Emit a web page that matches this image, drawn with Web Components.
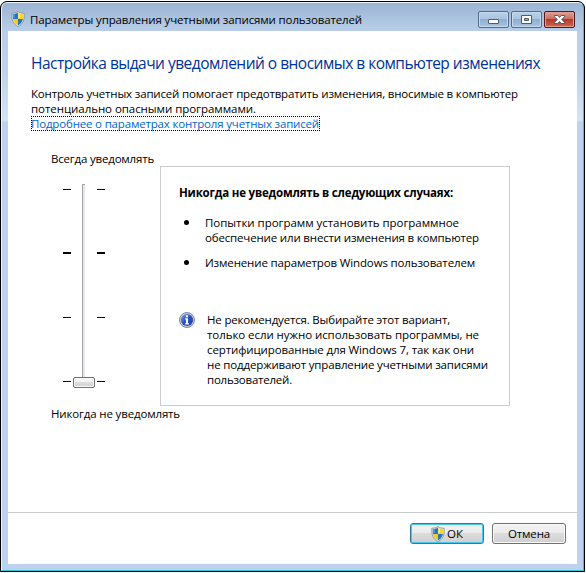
<!DOCTYPE html>
<html lang="ru"><head><meta charset="utf-8"><title>Параметры управления учетными записями пользователей</title>
<style>
html,body{margin:0;height:100%;overflow:hidden;background:#fff}
body{font:11.5px/15px "Open Sans","Noto Sans",sans-serif;color:#000}
</style></head><body>
<uac-window></uac-window>
<script>
class Base extends HTMLElement{
  constructor(){super();this.attachShadow({mode:'open'}).innerHTML=this.html();}
  html(){return '';}
}
// A single line of text spaced to an exact width (attribute w).
class TextLine extends Base{
  html(){return `<style>:host{display:block;white-space:pre;height:var(--lh,15px);line-height:var(--lh,15px)}span{display:inline-block;vertical-align:top}</style><span><slot></slot></span>`;}
  connectedCallback(){
    const s=this.shadowRoot.querySelector('span'),w=+this.getAttribute('w');
    const n=this.textContent.length,nat=s.getBoundingClientRect().width;
    if(w&&n)s.style.letterSpacing=((w-nat)/n).toFixed(4)+'px';
  }
}
class ShieldIcon extends Base{
  html(){return `<style>:host{display:block;width:14px;height:16px;flex:none}svg{display:block}</style>
<svg width="14" height="16" viewBox="0 0 14 16"><defs><clipPath id="c"><path d="M7 1.6C5.4 2.8 3.8 3.2 1.8 3.2C1.6 8.5 2.7 12 7 14.3C11.3 12 12.4 8.5 12.2 3.2C10.2 3.2 8.6 2.8 7 1.6Z"/></clipPath></defs>
<path d="M7 .5C5.3 1.8 3.4 2.3.8 2.2C.5 9 1.8 13 7 15.5C12.2 13 13.5 9 13.2 2.2C10.6 2.3 8.7 1.8 7 .5Z" fill="#e4e8ea" stroke="#7e8b92" stroke-width=".8"/>
<g clip-path="url(#c)"><path fill="#2474c0" d="M0 0H7V8H0Z"/><path fill="#f7d62c" d="M7 0H14V8H7Z"/><path fill="#f2cb25" d="M0 8H7V16H0Z"/><path fill="#2474c0" d="M7 8H14V16H7Z"/><path fill="#fff3a0" d="M7 2H9V7H7Z" opacity=".6"/><path fill="#5ba9df" d="M2 3H4V7H2Z" opacity=".6"/></g></svg>`;}
}
class CaptionButton extends Base{
  html(){
    const k=this.getAttribute('kind');
    const g={min:'<rect x="10.5" y="8.5" width="10" height="4" rx=".5" fill="#fff" stroke="#535b68"/>',
    max:'<path fill="#fff" stroke="#535b68" fill-rule="evenodd" d="M10.5 4.5h10v8h-10zM13.5 7.5v2h4v-2z"/>',
    close:'<path d="M10.5 4.5h3.3l1.7 2 1.7-2h3.3v1.2l-2.8 2.8 2.8 2.8v1.2h-3.3l-1.7-2-1.7 2h-3.3v-1.2l2.8-2.8-2.8-2.8z" fill="#fff" stroke="#5b4650" stroke-width=".9"/>'}[k];
    const c=k==='close';
    return `<style>:host{display:block;box-sizing:border-box;width:31px;height:17px;border:1px solid ${c?'#4d1720':'#53698a'};border-radius:2px;
box-shadow:inset 0 0 0 1px ${c?'#e2a093':'#c6daee'};background:${c?'linear-gradient(#dda095 0,#cc6d5d 48%,#b63a28 50%,#cc6550 100%)':'linear-gradient(#bbd0e8 0,#a9c3e0 48%,#8daed2 50%,#a7c4e3 100%)'}}svg{display:block;margin:-1px}</style><svg width="31" height="17">${g}</svg>`;}
}
class TitleBar extends Base{
  html(){return `<style>:host{display:flex;height:28px;padding:0 2px 0 3px;align-items:flex-start}
shield-icon{margin-top:8px}text-line{margin:9px 0 0 5px;flex:1}.b{display:flex;gap:2px;margin-top:8px}</style>
<shield-icon></shield-icon><text-line w="332">Параметры управления учетными записями пользователей</text-line>
<div class="b"><caption-button kind="min"></caption-button><caption-button kind="max"></caption-button><caption-button kind="close"></caption-button></div>`;}
}
class LevelSlider extends Base{
  html(){return `<style>:host{display:grid;width:42px;height:204px;grid-template-columns:8px 26px 8px;justify-content:space-between}
.t{box-sizing:border-box;display:flex;flex-direction:column;padding:5px 0 0;height:198px;gap:63px}
i{display:block;height:1px;background:#000}i.f{height:2px;margin:-1px 0 0}
.r{display:flex;flex-direction:column;align-items:center;height:204px}
.l{box-sizing:border-box;width:3px;height:193px;border:1px solid #c9c9cb;border-width:1px 0 0 1px;border-color:#a5a5aa;background:#e7e7ea;margin-left:-2px}
.h{box-sizing:border-box;width:22px;height:11px;border:1px solid #707070;border-radius:2px;background:linear-gradient(#f4f4f4 45%,#dcdcdc 50%,#d3d3d3);box-shadow:inset 0 0 0 1px #fafafa}</style>
<div class="t"><i></i><i class="f"></i><i></i><i></i></div><div class="r"><div class="l"></div><div class="h"></div></div><div class="t"><i></i><i class="f"></i><i></i><i></i></div>`;}
}
class InfoIcon extends Base{
  html(){return `<style>:host{display:block}svg{display:block}</style><svg width="16" height="16"><defs><linearGradient id="g" x2="1" y2="1"><stop stop-color="#7fa5ee"/><stop offset=".5" stop-color="#2750bf"/><stop offset="1" stop-color="#1c3ea8"/></linearGradient></defs><circle cx="8" cy="8" r="7.5" fill="#c9ccd3" stroke="#858b98"/><circle cx="8" cy="8" r="6.1" fill="url(#g)"/><path d="M7 3.2h2v2H7zM6.2 6.3H9v5h1v1.2H6.1v-1.2H7V7.4h-.8z" fill="#fff"/></svg>`;}
}
class DetailPanel extends Base{
  html(){return `<style>:host{display:block;box-sizing:border-box;width:350px;height:240px;border:1px solid #ccc;padding:18px 0 0 18px}
.b{font-weight:700}.row{display:grid;grid-template-columns:26px 1fr}.dot{width:5px;height:5px;border-radius:50%;background:#000;margin:5px 0 0 5px}</style>
<text-line class="b" w="274">Никогда не уведомлять в следующих случаях:</text-line>
<div class="row" style="margin-top:15px"><div class="dot"></div><div><text-line w="254">Попытки программ установить программное</text-line><text-line w="274">обеспечение или внести изменения в компьютер</text-line></div></div>
<div class="row" style="margin-top:10px"><div class="dot"></div><text-line w="270">Изменение параметров Windows пользователем</text-line></div>
<div class="row" style="margin-top:42px;grid-template-columns:28px 1fr"><info-icon></info-icon><div><text-line w="243">Не рекомендуется. Выбирайте этот вариант,</text-line><text-line w="272">только если нужно использовать программы, не</text-line><text-line w="267">сертифицированные для Windows 7, так как они</text-line><text-line w="281">не поддерживают управление учетными записями</text-line><text-line w="85">пользователей.</text-line></div></div>`;}
}
class PushButton extends Base{
  html(){const d=this.hasAttribute('default');return `<style>:host{display:flex;box-sizing:border-box;width:74px;height:21px;border:1px solid ${d?'#2c7c9d':'#707070'};border-radius:3px;align-items:center;justify-content:center;gap:2px;
background:linear-gradient(#f3f3f3,#ebebeb 49%,#dcdcdc 50%,#cfcfcf);box-shadow:inset 0 0 0 ${d?'1px #48c8f0':'1px #fafafa'}}</style><slot></slot>`;}
}
class UacWindow extends Base{
  html(){return `<style>:host{display:block;box-sizing:border-box;width:585px;height:571px;margin-top:1px;border:1px solid #000;border-radius:7px 7px 0 0;background:#000}
.frame{box-sizing:border-box;height:569px;border:1px solid #37c5de;border-left-color:#eef5fc;border-top-color:#eaf2fa;border-radius:6px 6px 0 0;padding:0 6px 6px;background:linear-gradient(#9bb5d3 0,#b9cee8 28px,#bfd3ed 70px,#d4e4f5 117px,#bdd2ee 119px,#bdd2ee)}
.body{box-sizing:border-box;height:533px;background:#fff;display:flex;flex-direction:column}
.main{height:481px;box-sizing:border-box;padding:21px 0 0 23px}
h1{margin:0;font-size:15.5px;font-weight:400;color:#003399;--lh:22px}
.intro{margin-top:12px}.link{width:289px;height:15px;outline:1px dotted #000;outline-offset:-1px;color:#0066cc}
.link text-line{text-decoration:underline}
.cols{display:grid;grid-template-columns:129px 350px;margin-top:20px}
.left{padding-left:20px}.left level-slider{margin:18px 0 0 12px}.left .bot{margin-top:18px}
detail-panel{margin-top:15px}
.foot{display:flex;gap:8px;justify-content:flex-end;border-top:1px solid #ccc;padding:10px 11px 0 0}</style>
<div class="frame"><title-bar></title-bar><div class="body"><div class="main">
<h1><text-line w="509">Настройка выдачи уведомлений о вносимых в компьютер изменениях</text-line></h1>
<div class="intro"><text-line w="487">Контроль учетных записей помогает предотвратить изменения, вносимые в компьютер</text-line><text-line w="225">потенциально опасными программами.</text-line></div>
<div class="link"><text-line w="288">Подробнее о параметрах контроля учетных записей</text-line></div>
<div class="cols"><div class="left"><text-line w="103">Всегда уведомлять</text-line><level-slider></level-slider><text-line class="bot" w="129">Никогда не уведомлять</text-line></div><detail-panel></detail-panel></div>
</div><div class="foot"><push-button default><shield-icon></shield-icon><text-line w="16">ОК</text-line></push-button><push-button><text-line w="42">Отмена</text-line></push-button></div></div></div>`;}
}
customElements.define('text-line',TextLine);customElements.define('shield-icon',ShieldIcon);customElements.define('caption-button',CaptionButton);
customElements.define('title-bar',TitleBar);customElements.define('level-slider',LevelSlider);customElements.define('info-icon',InfoIcon);
customElements.define('detail-panel',DetailPanel);customElements.define('push-button',PushButton);customElements.define('uac-window',UacWindow);
</script></body></html>
